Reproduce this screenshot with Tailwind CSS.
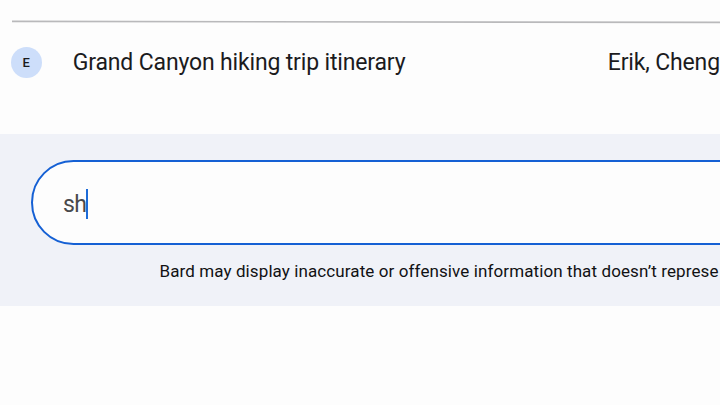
<!DOCTYPE html>
<html lang="en">
<head>
    <meta charset="UTF-8">
    <meta name="viewport" content="width=device-width, initial-scale=1.0">
    <title>Bard</title>
    <script src="https://cdn.jsdelivr.net/npm/@tailwindcss/browser@4"></script>
</head>
<body class="bg-[#fdfdfd] text-[#1b1b1d] font-[Roboto,sans-serif] overflow-hidden">
    <div class="flex flex-col h-screen overflow-hidden">
        <div class="h-[134.4px] shrink-0 pl-[10.6px]">
            <svg class="block ml-[1.4px] mt-5 w-[720px] h-1" viewBox="0 0 720 4">
                <line x1="0" y1="1.4" x2="720" y2="2.4" stroke="#b9b9bb" stroke-width="1.6"/>
            </svg>
            <div class="flex items-center mt-[22px] h-8 whitespace-nowrap">
                <div class="w-[31px] h-[31px] shrink-0 rounded-full bg-[#cddefa] flex items-center justify-center text-[13px] font-medium pt-px">E</div>
                <div class="ml-[31.2px] w-[535px] shrink-0 pt-0.5 text-[23px] leading-8 tracking-[-0.16px]"><span>Grand Canyon hiking trip itinerary</span></div>
                <div class="shrink-0 pt-0.5 text-[23px] leading-8 tracking-[-0.15px]"><span>Erik, Cheng</span></div>
            </div>
        </div>
        <div class="h-[172px] shrink-0 bg-[#f0f2f8] pt-[25.6px]">
            <div class="ml-[31px] w-[760px] h-[85px] rounded-full border-2 border-[#1560d4] bg-[#fdfdfd] flex items-center pl-[30px] pt-[3px]">
                <span class="pt-0.5 text-[23px] leading-8 tracking-[-0.6px] text-[#48494b]">sh</span>
                <span class="w-0.5 h-[30px] bg-[#1d6bd8]"></span>
            </div>
            <p class="ml-[159.5px] mt-[14px] text-[17px] leading-6 tracking-[0.1px] text-[#111113] whitespace-nowrap">Bard may display inaccurate or offensive information that doesn’t represe</p>
        </div>
    </div>
</body>
</html>
